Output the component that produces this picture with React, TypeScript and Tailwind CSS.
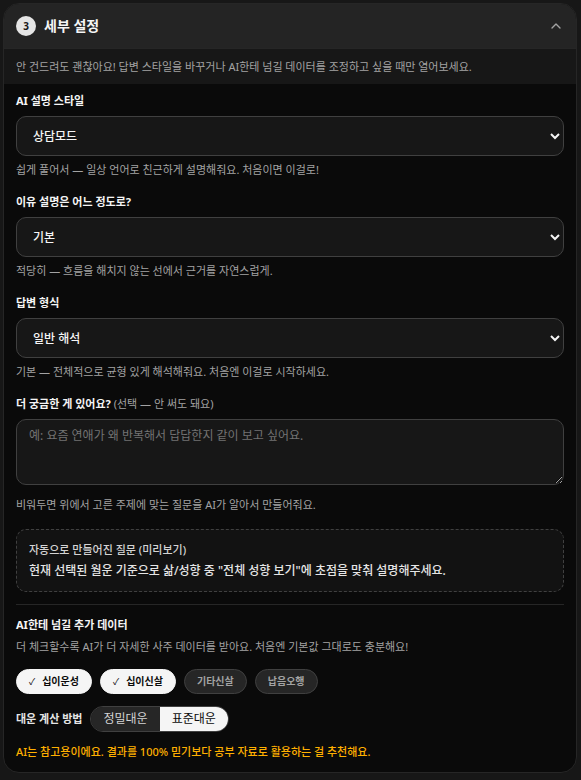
import { useState } from 'react'
import { ChevronUp } from 'lucide-react'
import clsx from 'clsx'

interface SelectField {
  id: string
  label: string
  options: { name: string; hint: string }[]
}

const fields: SelectField[] = [
  {
    id: 'style',
    label: 'AI 설명 스타일',
    options: [{ name: '상담모드', hint: '쉽게 풀어서 — 일상 언어로 친근하게 설명해줘요. 처음이면 이걸로!' }],
  },
  {
    id: 'reason',
    label: '이유 설명은 어느 정도로?',
    options: [{ name: '기본', hint: '적당히 — 흐름을 해치지 않는 선에서 근거를 자연스럽게.' }],
  },
  {
    id: 'format',
    label: '답변 형식',
    options: [{ name: '일반 해석', hint: '기본 — 전체적으로 균형 있게 해석해줘요. 처음엔 이걸로 시작하세요.' }],
  },
]

const extras = ['십이운성', '십이신살', '기타신살', '납음오행']
const methods = ['정밀대운', '표준대운']

function SelectRow({ field }: { field: SelectField }) {
  const [value, setValue] = useState(field.options[0].name)
  const current = field.options.find(o => o.name === value)

  return (
    <div className="mb-[15px]">
      <label htmlFor={field.id} className="block leading-[18px] font-bold text-neutral-100">
        {field.label}
      </label>
      <select
        id={field.id}
        value={value}
        onChange={e => setValue(e.target.value)}
        className="mt-1.5 block h-10 w-full rounded-[10px] border border-[#404040] bg-[#171717] px-3 text-xs font-medium text-neutral-100"
      >
        {field.options.map(o => (
          <option key={o.name}>{o.name}</option>
        ))}
      </select>
      <p className="mt-[5px] leading-[17px] text-[#a3a3a3]">{current?.hint}</p>
    </div>
  )
}

export default function App() {
  const [open, setOpen] = useState(true)
  const [question, setQuestion] = useState('')
  const [selected, setSelected] = useState(['십이운성', '십이신살'])
  const [method, setMethod] = useState('표준대운')

  const toggleExtra = (name: string) => {
    setSelected(prev => (prev.includes(name) ? prev.filter(n => n !== name) : [...prev, name]))
  }

  return (
    <div className="min-h-screen bg-[#171717] p-[3px] font-['Noto_Sans','Noto_Sans_CJK_KR',sans-serif] text-[11px]">
      <section className="mr-px overflow-hidden rounded-2xl border border-[#262626] bg-[#0a0a0a]">
        <button
          type="button"
          aria-expanded={open}
          onClick={() => setOpen(!open)}
          className="flex h-11 w-full items-center gap-2 bg-[#242424] px-3 text-left"
        >
          <span className="flex size-5 items-center justify-center rounded-full bg-[#e5e5e5] text-[10px] font-bold text-neutral-900">
            3
          </span>
          <span className="text-sm font-bold text-neutral-100">세부 설정</span>
          <ChevronUp size={16} strokeWidth={2} className="ml-auto text-[#a3a3a3]" />
        </button>

        {open && (
          <>
            <p className="border-t border-[#262626] bg-[#171717] px-3 py-2 leading-[19px] text-[#a3a3a3]">
              안 건드려도 괜찮아요! 답변 스타일을 바꾸거나 AI한테 넘길 데이터를 조정하고 싶을 때만 열어보세요.
            </p>

            <div className="px-3 pt-2 pb-3">
              {fields.map(field => (
                <SelectRow key={field.id} field={field} />
              ))}

              <label htmlFor="question" className="block leading-[18px] font-bold text-neutral-100">
                더 궁금한 게 있어요? <span className="font-normal text-[#a3a3a3]">(선택 — 안 써도 돼요)</span>
              </label>
              <textarea
                id="question"
                value={question}
                onChange={e => setQuestion(e.target.value)}
                placeholder="예: 요즘 연애가 왜 반복해서 답답한지 같이 보고 싶어요."
                className="mt-1.5 block h-[66px] w-full resize-y rounded-[10px] border border-[#404040] bg-[#171717] px-3 py-2 text-xs text-neutral-100 placeholder:text-[#737373]"
              />
              <p className="mt-[11px] leading-[17px] text-[#a3a3a3]">
                비워두면 위에서 고른 주제에 맞는 질문을 AI가 알아서 만들어줘요.
              </p>

              <div className="mt-4 rounded-[10px] border border-dashed border-[#404040] bg-[#121212] px-3 py-2.5">
                <p className="leading-5 font-medium text-[#d4d4d4]">자동으로 만들어진 질문 (미리보기)</p>
                <p className="text-xs leading-[21px] font-medium text-[#e5e5e5]">
                  현재 선택된 월운 기준으로 삶/성향 중 "전체 성향 보기"에 초점을 맞춰 설명해주세요.
                </p>
              </div>

              <div className="mt-3 border-t border-[#262626] pt-[11px]">
                <h3 className="leading-[18px] font-bold text-neutral-100">AI한테 넘길 추가 데이터</h3>
                <p className="mt-1 leading-[17px] text-[#a3a3a3]">
                  더 체크할수록 AI가 더 자세한 사주 데이터를 받아요. 처음엔 기본값 그대로도 충분해요!
                </p>
                <div className="mt-3.5 flex flex-wrap gap-2">
                  {extras.map(name => {
                    const on = selected.includes(name)
                    return (
                      <button
                        key={name}
                        type="button"
                        aria-pressed={on}
                        onClick={() => toggleExtra(name)}
                        className={clsx(
                          'flex h-[25px] items-center gap-[7px] rounded-full border px-3 text-[10px] font-semibold',
                          on
                            ? 'border-neutral-100 bg-neutral-100 text-neutral-950'
                            : 'border-[#404040] bg-[#262626] text-[#a3a3a3]'
                        )}
                      >
                        {on && <span className="text-[9px] font-normal">✓</span>}
                        {name}
                      </button>
                    )
                  })}
                </div>

                <div className="mt-3 flex items-center gap-2">
                  <span id="method-label" className="font-bold text-[#e5e5e5]">
                    대운 계산 방법
                  </span>
                  <div
                    role="group"
                    aria-labelledby="method-label"
                    className="flex h-[26px] overflow-hidden rounded-full border border-[#404040]"
                  >
                    {methods.map(name => (
                      <button
                        key={name}
                        type="button"
                        aria-pressed={method === name}
                        onClick={() => setMethod(name)}
                        className={clsx(
                          'px-3 text-xs',
                          method === name ? 'bg-neutral-100 text-neutral-950' : 'bg-[#262626] text-[#d4d4d4]'
                        )}
                      >
                        {name}
                      </button>
                    ))}
                  </div>
                </div>

                <p className="mt-[11px] leading-[17px] font-medium text-[#ffb000]">
                  AI는 참고용이에요. 결과를 100% 믿기보다 공부 자료로 활용하는 걸 추천해요.
                </p>
              </div>
            </div>
          </>
        )}
      </section>
    </div>
  )
}
